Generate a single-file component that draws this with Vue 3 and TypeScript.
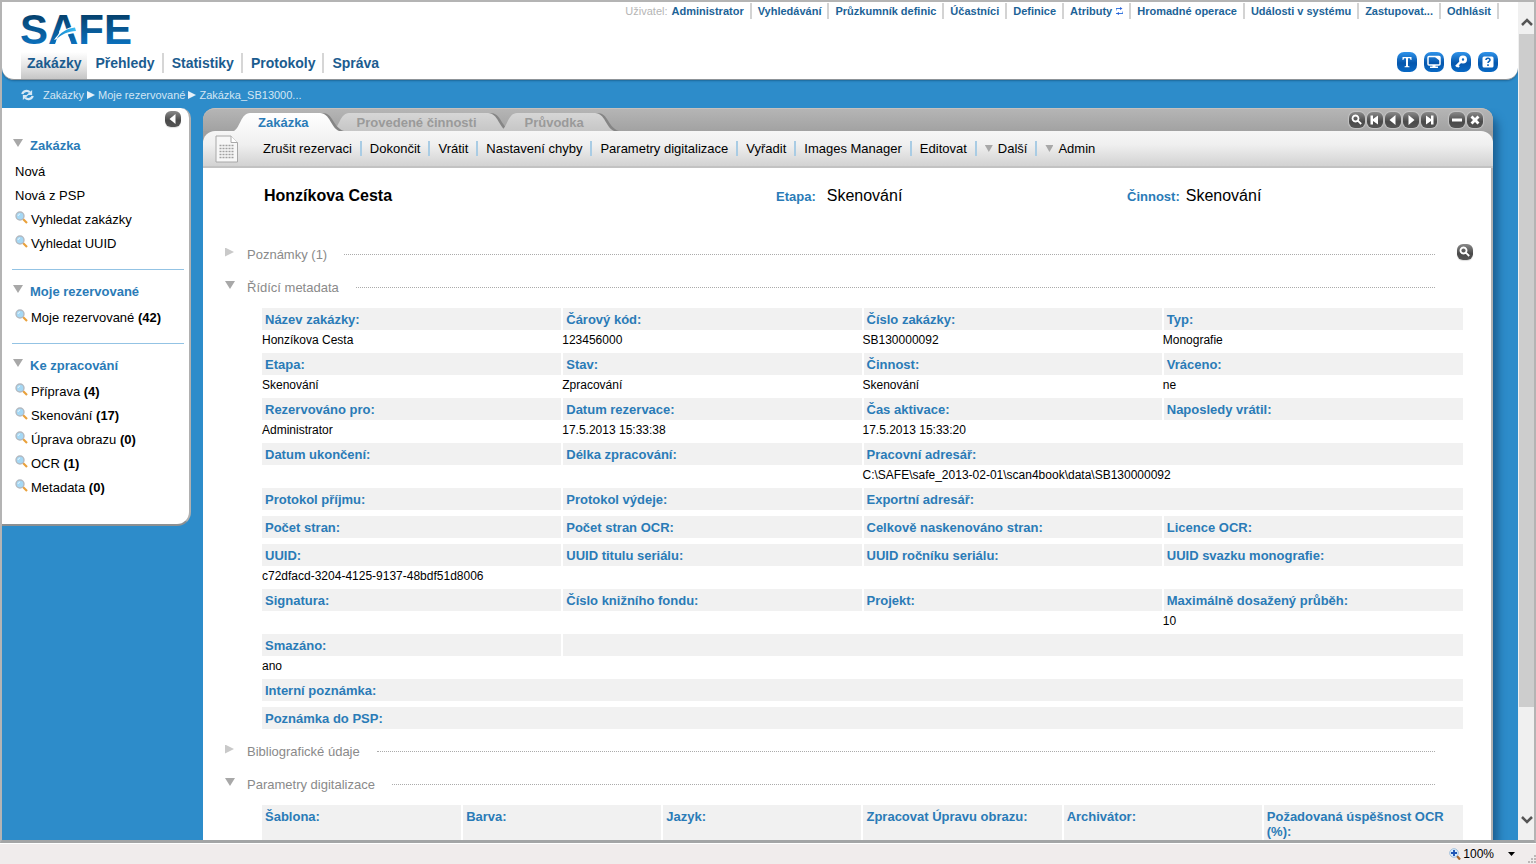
<script setup lang="ts">
interface Field {
  label: string
  value?: string
  span?: number
}
interface NavButton {
  name: string
  icon: string
}

const userLinks: string[] = [
  'Administrator', 'Vyhledávání', 'Průzkumník definic', 'Účastníci', 'Definice',
  'Atributy', 'Hromadné operace', 'Události v systému', 'Zastupovat...', 'Odhlásit',
]
const mainNav: string[] = ['Zakázky', 'Přehledy', 'Statistiky', 'Protokoly', 'Správa']
const crumbs: string[] = ['Zakázky', 'Moje rezervované', 'Zakázka_SB13000...']
const tabs: string[] = ['Zakázka', 'Provedené činnosti', 'Průvodka']

const menus = [
  {
    title: 'Zakázka',
    items: [
      { text: 'Nová', search: false },
      { text: 'Nová z PSP', search: false },
      { text: 'Vyhledat zakázky', search: true },
      { text: 'Vyhledat UUID', search: true },
    ],
  },
  { title: 'Moje rezervované', items: [{ text: 'Moje rezervované', search: true, count: 42 }] },
  {
    title: 'Ke zpracování',
    items: [
      { text: 'Příprava', search: true, count: 4 },
      { text: 'Skenování', search: true, count: 17 },
      { text: 'Úprava obrazu', search: true, count: 0 },
      { text: 'OCR', search: true, count: 1 },
      { text: 'Metadata', search: true, count: 0 },
    ],
  },
] as { title: string; items: { text: string; search: boolean; count?: number }[] }[]

const actions = [
  { text: 'Zrušit rezervaci' }, { text: 'Dokončit' }, { text: 'Vrátit' },
  { text: 'Nastavení chyby' }, { text: 'Parametry digitalizace' }, { text: 'Vyřadit' },
  { text: 'Images Manager' }, { text: 'Editovat' },
  { text: 'Další', menu: true }, { text: 'Admin', menu: true },
] as { text: string; menu?: boolean }[]

const lens = 'M6.5 3.5a3 3 0 1 0 .01 0M8.8 8.6L12.2 12'
const panelButtons: NavButton[] = [
  { name: 'Hledat', icon: 'lens' },
  { name: 'První', icon: 'M3.500 3.500h2.500v3.500L11 3.500v9L6 9V12.500H3.500z' },
  { name: 'Předchozí', icon: 'M10.500 3v10L4.500 8z' },
  { name: 'Další záznam', icon: 'M5.500 3v10L11.500 8z' },
  { name: 'Poslední', icon: 'M12.500 3.500h-2.500v3.500L5 3.500v9L10 9V12.500h2.500z' },
  { name: 'Minimalizovat', icon: 'M3 6.500h10v3h-10z' },
  { name: 'Zavřít', icon: 'M3.500 5.500L5.500 3.500 8 6 10.500 3.500 12.500 5.500 10 8 12.500 10.500 10.500 12.500 8 10 5.500 12.500 3.500 10.500 6 8z' },
]

const metadata: Field[][] = [
  [
    { label: 'Název zakázky:', value: 'Honzíkova Cesta' },
    { label: 'Čárový kód:', value: '123456000' },
    { label: 'Číslo zakázky:', value: 'SB130000092' },
    { label: 'Typ:', value: 'Monografie' },
  ],
  [
    { label: 'Etapa:', value: 'Skenování' },
    { label: 'Stav:', value: 'Zpracování' },
    { label: 'Činnost:', value: 'Skenování' },
    { label: 'Vráceno:', value: 'ne' },
  ],
  [
    { label: 'Rezervováno pro:', value: 'Administrator' },
    { label: 'Datum rezervace:', value: '17.5.2013 15:33:38' },
    { label: 'Čas aktivace:', value: '17.5.2013 15:33:20' },
    { label: 'Naposledy vrátil:' },
  ],
  [
    { label: 'Datum ukončení:' },
    { label: 'Délka zpracování:' },
    { label: 'Pracovní adresář:', value: 'C:\\SAFE\\safe_2013-02-01\\scan4book\\data\\SB130000092', span: 2 },
  ],
  [{ label: 'Protokol příjmu:' }, { label: 'Protokol výdeje:' }, { label: 'Exportní adresář:', span: 2 }],
  [{ label: 'Počet stran:' }, { label: 'Počet stran OCR:' }, { label: 'Celkově naskenováno stran:' }, { label: 'Licence OCR:' }],
  [
    { label: 'UUID:', value: 'c72dfacd-3204-4125-9137-48bdf51d8006' },
    { label: 'UUID titulu seriálu:' },
    { label: 'UUID ročníku seriálu:' },
    { label: 'UUID svazku monografie:' },
  ],
  [
    { label: 'Signatura:' },
    { label: 'Číslo knižního fondu:' },
    { label: 'Projekt:' },
    { label: 'Maximálně dosažený průběh:', value: '10' },
  ],
  [{ label: 'Smazáno:', value: 'ano' }, { label: '', span: 3 }],
  [{ label: 'Interní poznámka:', span: 4 }],
  [{ label: 'Poznámka do PSP:', span: 4 }],
]
const hasValues = (row: Field[]): boolean => row.some((f) => f.value !== undefined)

const parameters: string[] = [
  'Šablona:', 'Barva:', 'Jazyk:', 'Zpracovat Úpravu obrazu:', 'Archivátor:', 'Požadovaná úspěšnost OCR (%):',
]
</script>

<template>
  <div class="window">
    <svg class="defs" aria-hidden="true">
      <defs>
        <linearGradient id="logoFill" x1="0" y1="0" x2="0" y2="1">
          <stop offset="0.2" stop-color="#05426f" />
          <stop offset="0.8" stop-color="#0b6fba" />
        </linearGradient>
        <linearGradient id="swoosh" x1="0" y1="0" x2="1" y2="0">
          <stop offset="0" stop-color="#0f7fc9" />
          <stop offset="1" stop-color="#3fc0f5" />
        </linearGradient>
        <linearGradient id="tabOn" x1="0" y1="0" x2="0" y2="1">
          <stop offset="0" stop-color="#ffffff" />
          <stop offset="1" stop-color="#f6f6f6" />
        </linearGradient>
        <linearGradient id="tabOff" x1="0" y1="0" x2="0" y2="1">
          <stop offset="0" stop-color="#d6d6d6" />
          <stop offset="1" stop-color="#c6c6c6" />
        </linearGradient>
        <symbol id="glass" viewBox="0 0 13 13">
          <path d="M8 8l4 4" stroke="#e9a13b" stroke-width="2.200" />
          <circle cx="5" cy="5" r="4" fill="#a5d8f5" stroke="#b3b9c0" stroke-width="1.400" />
          <path d="M3 5a2.500 2.500 0 0 1 2-2" stroke="#e8f7ff" fill="none" />
        </symbol>
      </defs>
    </svg>

    <div class="viewport">
      <div class="page">
        <header class="header">
          <div class="header-top">
            <svg class="logo" width="116" height="38" role="img" aria-label="SAFE">
              <text x="-1" y="33" fill="url(#logoFill)">SAFE</text>
              <path d="M34 34L38.700 19.500H45.500L50.500 34z" fill="#fff" />
              <path d="M33 29C38 21 45 17 54 15L56 22C51 22 46 23 42 26z" fill="#fff" />
              <path d="M35.500 28C39 21.500 46 17.500 54 16.500L55 20C47 20.500 41 23 35.500 28z" fill="url(#swoosh)" />
            </svg>
            <nav class="user-nav" aria-label="Uživatel">
              <span class="user-label">Uživatel:</span>
              <a v-for="link in userLinks" :key="link" href="#">{{ link }}<svg v-if="link === 'Atributy'" width="7" height="8" viewBox="0 0 7 8"><path d="M0 3.500V1.500h4M0 6.500h4M7 4.500v2H3" fill="none" stroke="#3a7be0" stroke-width="1.200" /><path d="M4 0l2.500 1.500L4 3zM3 5L.5 6.500 3 8z" fill="#2b62d9" /></svg></a>
            </nav>
          </div>
          <div class="header-bottom">
            <nav class="main-nav" aria-label="Hlavní nabídka">
              <a v-for="(item, i) in mainNav" :key="item" href="#" :class="{ active: i === 0 }">{{ item }}</a>
            </nav>
            <div class="tools">
              <button type="button" aria-label="Text">
                <svg viewBox="0 0 20 20"><path d="M5.500 5h9v3h-.8l-.8-1.700h-1.900v7.700l1.500.4v.8H7.500v-.8l1.500-.4V6.300H7.100L6.300 8h-.8z" fill="#fff" /></svg>
              </button>
              <button type="button" aria-label="Obrazovka">
                <svg viewBox="0 0 20 20"><rect x="4" y="4.500" width="12" height="8.500" rx="1" fill="none" stroke="#fff" stroke-width="1.500" /><path d="M11 5h5v4zM8.500 13h3v1.500H14V16H6v-1.500h2.500z" fill="#fff" /></svg>
              </button>
              <button type="button" aria-label="Heslo">
                <svg viewBox="0 0 20 20"><circle cx="12" cy="7.500" r="2.600" fill="none" stroke="#fff" stroke-width="2.800" /><path d="M10 9.500L5 14.500M6 13l2 2" stroke="#fff" stroke-width="2.400" /></svg>
              </button>
              <button type="button" aria-label="Nápověda">
                <svg viewBox="0 0 20 20"><rect x="4.500" y="4.500" width="11" height="11" rx="1.500" fill="#fff" /><path d="M8 8c0-2.400 4-2.400 4 0 0 1.500-2 1.300-2 3M10 12.300v1.600" fill="none" stroke="#0d62b8" stroke-width="1.600" /></svg>
              </button>
            </div>
          </div>
        </header>

        <nav class="crumbs" aria-label="Cesta">
          <button type="button" aria-label="Obnovit">
            <svg width="13" height="12" viewBox="0 0 14 12"><path d="M1.500 5C2 1.500 7 .5 9.500 3M12.500 7C12 10.500 7 11.500 4.500 9" fill="none" stroke="#d6e8f5" stroke-width="2.400" /><path d="M12 .5v5.500H6zM2 11.500V6h6z" fill="#d6e8f5" /></svg>
          </button>
          <template v-for="(c, i) in crumbs" :key="c">
            <svg v-if="i > 0" width="8" height="8" viewBox="0 0 8 8"><path d="M0 0l8 4-8 4z" fill="#e6f1f9" /></svg>
            <a href="#">{{ c }}</a>
          </template>
        </nav>

        <div class="body">
          <aside class="sidebar">
            <div class="collapse">
              <button type="button" class="round" aria-label="Skrýt nabídku">
                <svg viewBox="0 0 16 16"><path d="M10.500 3v10L4.500 8z" fill="#fff" /></svg>
              </button>
            </div>
            <section v-for="menu in menus" :key="menu.title" class="menu">
              <h2><i class="down"></i>{{ menu.title }}</h2>
              <ul>
                <li v-for="item in menu.items" :key="item.text">
                  <a href="#">
                    <svg v-if="item.search" class="glass"><use href="#glass" /></svg>
                    <span>{{ item.text }} <b v-if="item.count !== undefined">({{ item.count }})</b></span>
                  </a>
                </li>
              </ul>
            </section>
          </aside>

          <main class="panel">
            <div class="strip">
              <div class="tabs" role="tablist">
                <button v-for="(tab, i) in tabs" :key="tab" type="button" role="tab" :aria-selected="i === 0" :class="['tab', { on: i === 0 }]">
                  <svg class="cap" width="16" height="18"><path d="M0 18C6 15 7 0 16 0v18z" :fill="i === 0 ? 'url(#tabOn)' : 'url(#tabOff)'" /></svg>
                  <span>{{ tab }}</span>
                  <svg class="cap" width="24" height="18"><path d="M2 0C14 0 12 14 24 18H0V0z" fill="#858585" /><path d="M0 0C10 0 11 15 19 18H0z" :fill="i === 0 ? 'url(#tabOn)' : 'url(#tabOff)'" /></svg>
                </button>
              </div>
              <div class="panel-buttons">
                <button v-for="b in panelButtons" :key="b.name" type="button" class="round" :aria-label="b.name">
                  <svg viewBox="0 0 16 16">
                    <path v-if="b.icon === 'lens'" :d="lens" class="lens" />
                    <path v-else :d="b.icon" fill="#fff" />
                  </svg>
                </button>
              </div>
            </div>

            <div class="toolbar">
              <svg class="doc" width="24" height="28" viewBox="0 0 24 28">
                <path d="M1 1h15l6.500 6.500V27H1z" fill="#f7f7f7" stroke="#a8a8a8" />
                <path d="M16 1v6.500h6.500" fill="#fff" stroke="#a8a8a8" />
                <path d="M4.500 10.500h15M4.500 13.500h15M4.500 16.500h15M4.500 19.500h15M4.500 22.500h15" stroke="#a0a0a0" stroke-width="1.500" stroke-dasharray="2 1" />
              </svg>
              <div class="actions">
                <button v-for="a in actions" :key="a.text" type="button"><i v-if="a.menu" class="down"></i>{{ a.text }}</button>
              </div>
            </div>

            <div class="content">
              <div class="summary">
                <h1>Honzíkova Cesta</h1>
                <p><b>Etapa:</b><span>Skenování</span></p>
                <p class="close"><b>Činnost:</b><span>Skenování</span></p>
              </div>

              <section>
                <h3><i class="right"></i><span>Poznámky (1)</span><i class="rule"></i>
                  <span class="side">
                    <button type="button" class="round" aria-label="Hledat v poznámkách">
                      <svg viewBox="0 0 16 16"><path :d="lens" class="lens" /></svg>
                    </button>
                  </span>
                </h3>
              </section>
              <section>
                <h3><i class="down"></i><span>Řídící metadata</span><i class="rule"></i><span class="side"></span></h3>
                <table>
                  <colgroup><col v-for="n in 4" :key="n" /></colgroup>
                  <tbody v-for="(row, r) in metadata" :key="r">
                    <tr class="labels">
                      <th v-for="f in row" :key="f.label" :colspan="f.span ?? 1">{{ f.label }}</th>
                    </tr>
                    <tr :class="hasValues(row) ? 'values' : 'spacer'">
                      <td v-for="f in row" :key="f.label" :colspan="f.span ?? 1">{{ f.value }}</td>
                    </tr>
                  </tbody>
                </table>
              </section>
              <section>
                <h3><i class="right"></i><span>Bibliografické údaje</span><i class="rule"></i><span class="side"></span></h3>
              </section>
              <section>
                <h3><i class="down"></i><span>Parametry digitalizace</span><i class="rule"></i><span class="side"></span></h3>
                <table>
                  <tbody>
                    <tr class="labels tall"><th v-for="p in parameters" :key="p">{{ p }}</th></tr>
                  </tbody>
                </table>
              </section>
            </div>
          </main>
        </div>
      </div>

      <div class="scrollbar">
        <button type="button" aria-label="Posunout nahoru">
          <svg width="12" height="8" viewBox="0 0 12 8"><path d="M1 7l5-5 5 5" fill="none" stroke="#555" stroke-width="2.500" /></svg>
        </button>
        <div class="track"><div class="thumb"></div></div>
        <button type="button" class="last" aria-label="Posunout dolů">
          <svg width="12" height="8" viewBox="0 0 12 8"><path d="M1 1l5 5 5-5" fill="none" stroke="#555" stroke-width="2.500" /></svg>
        </button>
      </div>
    </div>

    <footer class="status">
      <button type="button" class="zoom">
        <svg width="12" height="12" viewBox="0 0 12 12"><path d="M7.500 7.500l3.500 4" stroke="#a5672f" stroke-width="2.200" /><circle cx="5" cy="5" r="4.300" fill="#d9ecfb" stroke="#8fb4d6" stroke-width=".8" /><path d="M5 2v6M2 5h6" stroke="#1d55b5" stroke-width="1.900" /></svg>
        <span>100%</span>
        <i class="caret"></i>
      </button>
      <svg class="grip" width="9" height="9" viewBox="0 0 9 9"><path d="M7 0h2v2H7zM7 3h2v2H7zM7 6h2v2H7zM4 3h2v2H4zM4 6h2v2H4zM1 6h2v2H1z" fill="#bcb8b8" /></svg>
    </footer>
  </div>
</template>

<style>
body {
  margin: 0;
  overflow: hidden;
}
</style>

<style scoped>
.window {
  display: flex;
  flex-direction: column;
  height: 100vh;
  box-sizing: border-box;
  font-family: "Liberation Sans", Arial, sans-serif;
  font-size: 13px;
  color: #000;
  background: #f0ecec;
}
.window * {
  box-sizing: border-box;
}
.defs {
  position: absolute;
  width: 0;
  height: 0;
}
a {
  color: inherit;
  text-decoration: none;
}
button {
  padding: 0;
  border: 0;
  background: none;
  font: inherit;
  color: inherit;
}
h1, h2, h3, p, ul {
  margin: 0;
  padding: 0;
}
ul {
  list-style: none;
}
.viewport {
  flex: 1;
  min-height: 0;
  display: flex;
  overflow: hidden;
  border: 2px solid #b4b4b4;
  border-bottom: 3px solid #a3a5a6;
}
.page {
  flex: 1;
  min-width: 0;
  display: flex;
  flex-direction: column;
  background: #2d8cca;
}
.header {
  display: flex;
  flex-direction: column;
  flex: none;
  height: 78px;
  background: #fff;
  border-bottom: 1px solid #8f9498;
  border-radius: 0 0 12px 12px;
  box-shadow: 0 1px 2px #1d679a;
}
.header-top {
  display: flex;
  justify-content: space-between;
  height: 50px;
  padding: 0 19px;
}
.logo {
  margin-top: 9px;
}
.logo text {
  font-size: 42px;
  font-weight: bold;
}
.user-nav {
  display: flex;
  height: 16px;
  margin-top: 1px;
  font-size: 11px;
  line-height: 17px;
  color: #1c6397;
  font-weight: bold;
}
.user-label {
  color: #b5b5b5;
  font-weight: normal;
  padding-right: 4px;
}
.user-nav a {
  padding: 0 6px;
  border-right: 2px solid #d3d3d3;
}
.user-nav .user-label + a {
  padding-left: 0;
}
.user-nav svg {
  margin-left: 4px;
}
.header-bottom {
  display: flex;
  justify-content: space-between;
  padding: 0 20px 0 19px;
}
.main-nav {
  display: flex;
  align-items: flex-start;
  font-size: 14px;
  font-weight: bold;
  color: #1b5c8f;
}
.main-nav a {
  height: 20px;
  margin-top: 1px;
  line-height: 20px;
  padding: 0 7px 0 8px;
  border-right: 2px solid #d6d6d6;
}
.main-nav a:last-child {
  border-right: 0;
}
.main-nav a.active {
  height: 27px;
  margin-top: 0;
  line-height: 22px;
  padding: 0 6px;
  border: 0;
  background: linear-gradient(#fff, #e6e6e6 50%, #c6c6c6);
}
.tools {
  display: flex;
  gap: 7px;
}
.tools button {
  width: 20px;
  height: 20px;
  border-radius: 7px;
  background: linear-gradient(#2f93ea, #0657ad 55%, #0869c5);
}
.tools svg, .round svg {
  display: block;
}
.crumbs {
  display: flex;
  align-items: center;
  flex: none;
  gap: 3px;
  height: 28px;
  padding: 2px 19px 0;
  font-size: 11px;
  color: #d3e6f4;
}
.crumbs button {
  height: 12px;
  margin-right: 6px;
}
.crumbs button svg {
  display: block;
}
.body {
  flex: 1;
  min-height: 0;
  display: flex;
  align-items: flex-start;
  gap: 12px;
}
.sidebar {
  flex: none;
  width: 189px;
  padding-bottom: 25px;
  background: #fff;
  border-right: 2px solid #b0b0b0;
  border-bottom: 2px solid #8d9092;
  border-radius: 0 10px 14px 0;
}
.collapse {
  display: flex;
  justify-content: flex-end;
  height: 24px;
  padding: 3px 8px 0;
}
.round {
  width: 16px;
  height: 16px;
  border-radius: 6px;
  background: linear-gradient(#8a8a8a, #4a4a4a 60%, #555);
  box-shadow: 0 1px 1px #ddd;
}
.lens {
  fill: none;
  stroke: #fff;
  stroke-width: 1.800;
}
.menu {
  margin: 0 5px 0 10px;
}
.menu ul {
  padding-top: 1px;
}
.menu + .menu {
  margin-top: 14px;
  padding-top: 8px;
  border-top: 1px solid #93c3e4;
}
.menu h2 {
  display: flex;
  align-items: center;
  height: 26px;
  gap: 6px;
  font-size: 13px;
  color: #2a7bb7;
}
.menu a {
  display: flex;
  align-items: center;
  height: 24px;
  padding-left: 3px;
  gap: 3px;
  white-space: nowrap;
}
.menu .glass {
  width: 13px;
  height: 13px;
  margin-bottom: 3px;
}
.down, .right {
  flex: none;
  width: 10px;
  height: 8px;
  background: #a8a8a8;
  clip-path: polygon(0 0, 100% 0, 50% 100%);
}
.menu .down {
  margin: 0 1px 4px 1px;
}
.right {
  height: 9px;
  background: #c9c9c9;
  clip-path: polygon(0 0, 90% 50%, 0 100%);
}
.panel {
  flex: 1;
  min-width: 0;
  align-self: stretch;
  margin-right: 25px;
  background: #9f9f9f;
  border-radius: 12px 12px 0 0;
  box-shadow: 5px 8px 8px #1b5f92;
  clip-path: inset(0 -24px 0 0);
}
.strip {
  display: flex;
  justify-content: space-between;
  align-items: flex-end;
  height: 23px;
  padding: 0 10px 0 31px;
  border-radius: 12px 12px 0 0;
  border-top: 1px solid #c6c1bd;
  background: linear-gradient(#b5b5b5, #a2a2a2);
}
.tabs {
  display: flex;
}
.tab {
  position: relative;
  z-index: 1;
  display: flex;
  height: 18px;
  margin-right: -11px;
  font-weight: bold;
  color: #9a9a9a;
}
.tab.on {
  z-index: 2;
  color: #2a7bb7;
}
.tab span {
  height: 18px;
  padding: 0 11px 0 8px;
  line-height: 20px;
  background: linear-gradient(#d6d6d6, #c6c6c6);
}
.tab.on span {
  background: linear-gradient(#fff, #f6f6f6);
}
.cap {
  display: block;
}
.panel-buttons {
  display: flex;
  gap: 2px;
  padding-bottom: 3px;
}
.panel-buttons .round:nth-child(6) {
  margin-left: 10px;
}
.panel-buttons .round {
  box-shadow: 0 0 1px 1px #c4c4c4;
}
.toolbar {
  display: flex;
  align-items: center;
  height: 37px;
  padding: 0 12px;
  border-bottom: 2px solid #c2c2c2;
  border-radius: 12px 12px 0 0;
  background: linear-gradient(#f6f6f6, #efefef 40%, #d2d2d2);
}
.actions {
  display: flex;
  align-items: center;
  margin-left: 16px;
}
.actions button {
  display: flex;
  align-items: center;
  gap: 5px;
  height: 15px;
  padding: 0 8px;
  border-right: 2px solid #a9cce4;
  white-space: nowrap;
}
.actions button:last-child {
  border-right: 0;
}
.actions .down {
  width: 8px;
  height: 7px;
}
.content {
  height: calc(100% - 60px);
  padding: 0 18px 0 21px;
  overflow: hidden;
  background: #fff;
  border-right: 2px solid #b0b0b0;
}
.summary {
  display: grid;
  grid-template-columns: 512fr 351fr 338fr;
  align-items: center;
  height: 56px;
  margin: 0 8px 14px 40px;
}
.summary h1 {
  font-size: 16px;
}
.summary p {
  display: flex;
  align-items: center;
  gap: 11px;
}
.summary .close {
  gap: 6px;
}
.summary b {
  color: #2a7bb7;
}
.summary span {
  font-size: 16px;
}
h3 {
  display: flex;
  align-items: center;
  height: 33px;
  font-size: 13px;
  font-weight: normal;
  color: #8a8a8a;
}
h3 .down, h3 .right {
  margin: 0 12px 5px 1px;
}
.rule {
  flex: 1;
  height: 0;
  margin-left: 17px;
  border-top: 1px dotted #ababab;
}
.side {
  width: 38px;
  display: flex;
  justify-content: flex-end;
  padding-bottom: 5px;
}
table {
  width: calc(100% - 48px);
  margin: 4px 10px 0 38px;
  border-collapse: collapse;
  table-layout: fixed;
}
th, td {
  padding: 0;
  text-align: left;
}
.labels th {
  height: 22px;
  padding: 0 3px;
  color: #2a7bb7;
  background: #f1f1f1;
  background-clip: padding-box;
  border-right: 2px solid #fff;
}
.labels th:last-child {
  border-right: 0;
}
.labels.tall th {
  height: 48px;
  padding-top: 4px;
  line-height: 15px;
  vertical-align: top;
}
.values td {
  height: 23px;
  padding-bottom: 3px;
  font-size: 12px;
}
.spacer td {
  height: 6px;
}
.scrollbar {
  flex: none;
  display: flex;
  flex-direction: column;
  width: 16px;
  background: #f0f0f0;
  padding-left: 1px;
}
.scrollbar button {
  height: 32px;
  padding-top: 6px;
}
.scrollbar .last {
  padding: 0 0 9px;
}
.track {
  flex: 1;
}
.thumb {
  height: 87%;
  background: #cdcdcd;
}
.status {
  display: flex;
  justify-content: flex-end;
  align-items: center;
  flex: none;
  height: 21px;
  border-top: 1px solid #fff;
  font-size: 12px;
}
.zoom {
  display: flex;
  align-items: center;
  gap: 2px;
}
.caret {
  width: 7px;
  height: 4px;
  margin: 0 12px;
  background: #000;
  clip-path: polygon(0 0, 100% 0, 50% 100%);
}
.grip {
  align-self: flex-end;
}
</style>
